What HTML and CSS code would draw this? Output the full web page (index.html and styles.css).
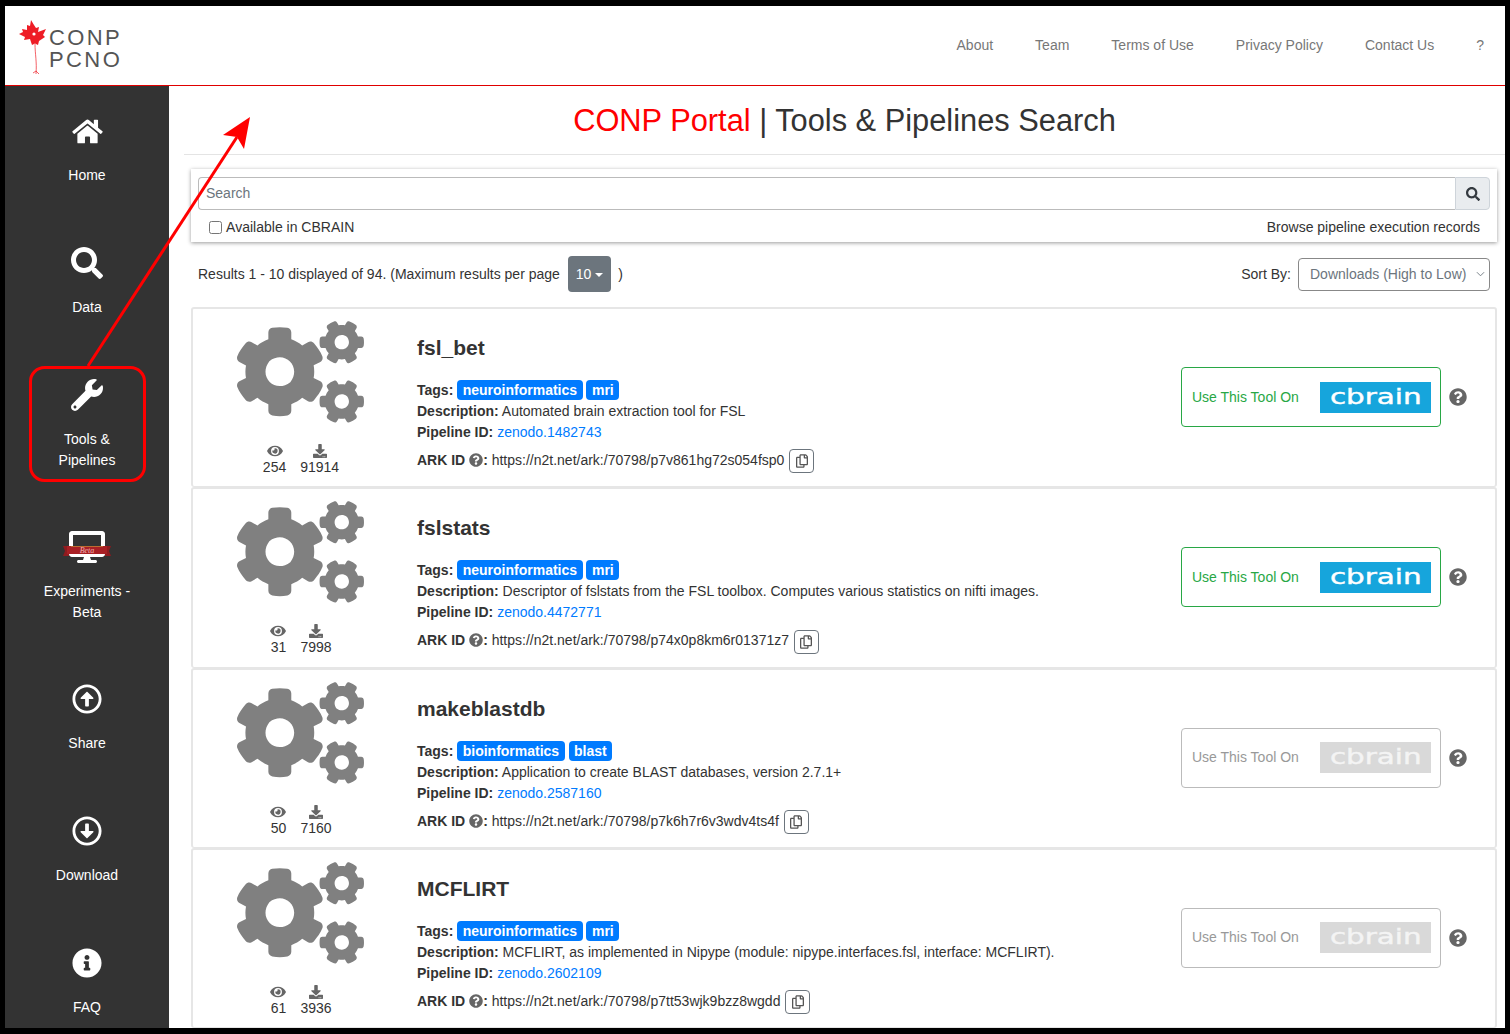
FILE: index.html
```html
<!doctype html>
<html lang="en">
<head>
  <meta charset="UTF-8">
  <meta name="viewport" content="width=device-width, initial-scale=1.0">
  <title>CONP Portal | Tools &amp; Pipelines Search</title>
  <link rel="stylesheet" href="styles.css">
</head>
<body>
  <!-- icon sprites -->
  <svg class="sprites" aria-hidden="true">
    <symbol id="i-home" viewBox="0 0 576 512"><path d="M280.37 148.26L96 300.11V464a16 16 0 0 0 16 16l112.06-.29a16 16 0 0 0 15.92-16V368a16 16 0 0 1 16-16h64a16 16 0 0 1 16 16v95.64a16 16 0 0 0 16 16.05L464 480a16 16 0 0 0 16-16V300L295.67 148.26a12.19 12.19 0 0 0-15.3 0zM571.6 251.47L488 182.56V44.05a12 12 0 0 0-12-12h-56a12 12 0 0 0-12 12v72.61L318.47 43a48 48 0 0 0-61 0L4.34 251.47a12 12 0 0 0-1.6 16.9l25.5 31A12 12 0 0 0 45.15 301l235.22-193.74a12.19 12.19 0 0 1 15.3 0L530.9 301a12 12 0 0 0 16.9-1.6l25.5-31a12 12 0 0 0-1.7-16.93z"/></symbol>
    <symbol id="i-search" viewBox="0 0 512 512"><path d="M505 442.7L405.3 343c-4.5-4.5-10.6-7-17-7H372c27.6-35.3 44-79.7 44-128C416 93.1 322.9 0 208 0S0 93.1 0 208s93.1 208 208 208c48.3 0 92.7-16.4 128-44v16.3c0 6.4 2.5 12.5 7 17l99.7 99.7c9.4 9.4 24.6 9.4 33.9 0l28.3-28.3c9.4-9.4 9.4-24.6.1-34zM208 336c-70.7 0-128-57.2-128-128 0-70.7 57.2-128 128-128 70.7 0 128 57.2 128 128 0 70.7-57.2 128-128 128z"/></symbol>
    <symbol id="i-wrench" viewBox="0 0 512 512"><path d="M507.73 109.1c-2.24-9.03-13.54-12.09-20.12-5.51l-74.36 74.36-67.88-11.31-11.31-67.88 74.36-74.36c6.62-6.62 3.43-17.9-5.66-20.16-47.38-11.74-99.55.91-136.58 37.93-39.64 39.64-50.55 97.1-34.05 147.2L18.74 402.76c-24.99 24.99-24.99 65.51 0 90.5 24.99 24.99 65.51 24.99 90.5 0l213.21-213.21c50.12 16.71 107.47 5.68 147.37-34.22 37.07-37.07 49.7-89.32 37.91-136.73zM64 472c-13.25 0-24-10.75-24-24 0-13.26 10.75-24 24-24s24 10.74 24 24c0 13.25-10.75 24-24 24z"/></symbol>
    <symbol id="i-desktop" viewBox="0 0 576 512"><path d="M528 0H48C21.5 0 0 21.5 0 48v320c0 26.5 21.5 48 48 48h192l-16 48h-72c-13.3 0-24 10.7-24 24s10.7 24 24 24h272c13.3 0 24-10.7 24-24s-10.7-24-24-24h-72l-16-48h192c26.5 0 48-21.5 48-48V48c0-26.5-21.5-48-48-48zm-16 352H64V64h448v288z"/></symbol>
    <symbol id="i-up" viewBox="0 0 512 512"><path d="M256 504c137 0 248-111 248-248S393 8 256 8 8 119 8 256s111 248 248 248zm0-448c110.5 0 200 89.5 200 200s-89.5 200-200 200S56 366.5 56 256 145.5 56 256 56zm20 328h-40c-6.6 0-12-5.4-12-12V256h-67c-10.7 0-16-12.9-8.5-20.5l99-99c4.7-4.7 12.3-4.7 17 0l99 99c7.6 7.6 2.2 20.5-8.5 20.5h-67v116c0 6.6-5.4 12-12 12z"/></symbol>
    <symbol id="i-down" viewBox="0 0 512 512"><path d="M256 8C119 8 8 119 8 256s111 248 248 248 248-111 248-248S393 8 256 8zm0 448c-110.5 0-200-89.5-200-200S145.5 56 256 56s200 89.5 200 200-89.5 200-200 200zm-32-316v116h-67c-10.7 0-16 12.9-8.5 20.5l99 99c4.7 4.7 12.3 4.7 17 0l99-99c7.6-7.6 2.2-20.5-8.5-20.5h-67V140c0-6.6-5.4-12-12-12h-40c-6.6 0-12 5.4-12 12z"/></symbol>
    <symbol id="i-info" viewBox="0 0 512 512"><path d="M256 8C119.043 8 8 119.083 8 256c0 136.997 111.043 248 248 248s248-111.003 248-248C504 119.083 392.957 8 256 8zm0 110c23.196 0 42 18.804 42 42s-18.804 42-42 42-42-18.804-42-42 18.804-42 42-42zm56 254c0 6.627-5.373 12-12 12h-88c-6.627 0-12-5.373-12-12v-24c0-6.627 5.373-12 12-12h12v-64h-12c-6.627 0-12-5.373-12-12v-24c0-6.627 5.373-12 12-12h64c6.627 0 12 5.373 12 12v100h12c6.627 0 12 5.373 12 12v24z"/></symbol>
    <symbol id="i-eye" viewBox="0 0 576 512"><path d="M572.52 241.4C518.29 135.59 410.93 64 288 64S57.68 135.64 3.48 241.41a32.35 32.35 0 0 0 0 29.19C57.71 376.41 165.07 448 288 448s230.32-71.64 284.52-177.41a32.35 32.35 0 0 0 0-29.19zM288 400a144 144 0 1 1 144-144 143.93 143.93 0 0 1-144 144zm0-240a95.31 95.31 0 0 0-25.31 3.79 47.85 47.85 0 0 1-66.9 66.9A95.78 95.78 0 1 0 288 160z"/></symbol>
    <symbol id="i-download" viewBox="0 0 512 512"><path d="M216 0h80c13.3 0 24 10.7 24 24v168h87.7c17.8 0 26.7 21.5 14.1 34.1L269.7 378.3c-7.5 7.5-19.8 7.5-27.3 0L90.1 226.1c-12.6-12.6-3.7-34.1 14.1-34.1H192V24c0-13.3 10.7-24 24-24zm296 376v112c0 13.3-10.7 24-24 24H24c-13.3 0-24-10.7-24-24V376c0-13.3 10.7-24 24-24h146.7l49 49c20.1 20.1 52.5 20.1 72.6 0l49-49H488c13.3 0 24 10.7 24 24zm-124 88c0-11-9-20-20-20s-20 9-20 20 9 20 20 20 20-9 20-20zm64 0c0-11-9-20-20-20s-20 9-20 20 9 20 20 20 20-9 20-20z"/></symbol>
    <symbol id="i-question" viewBox="0 0 512 512"><path d="M504 256c0 136.997-111.043 248-248 248S8 392.997 8 256C8 119.083 119.043 8 256 8s248 111.083 248 248zM262.655 90c-54.497 0-89.255 22.957-116.549 63.758-3.536 5.286-2.353 12.415 2.715 16.258l34.699 26.31c5.205 3.947 12.621 3.008 16.665-2.122 17.864-22.658 30.113-35.797 57.303-35.797 20.429 0 45.698 13.148 45.698 32.958 0 14.976-12.363 22.667-32.534 33.976C247.128 238.528 216 254.941 216 296v4c0 6.627 5.373 12 12 12h56c6.627 0 12-5.373 12-12v-1.333c0-28.462 83.186-29.647 83.186-106.667 0-58.002-60.165-102-116.531-102zM256 338c-25.365 0-46 20.635-46 46 0 25.364 20.635 46 46 46s46-20.636 46-46c0-25.365-20.635-46-46-46z"/></symbol>
    <symbol id="i-copy" viewBox="0 0 448 512"><path d="M433.941 65.941l-51.882-51.882A48 48 0 0 0 348.118 0H176c-26.51 0-48 21.49-48 48v48H48c-26.51 0-48 21.49-48 48v320c0 26.51 21.49 48 48 48h224c26.51 0 48-21.49 48-48v-48h80c26.51 0 48-21.49 48-48V99.882a48 48 0 0 0-14.059-33.941zM266 464H54a6 6 0 0 1-6-6V150a6 6 0 0 1 6-6h74v224c0 26.51 21.49 48 48 48h96v42a6 6 0 0 1-6 6zm128-96H182a6 6 0 0 1-6-6V54a6 6 0 0 1 6-6h106v88c0 13.255 10.745 24 24 24h88v202a6 6 0 0 1-6 6zm6-256h-64V48h9.632c1.591 0 3.117.632 4.243 1.757l48.368 48.368a6 6 0 0 1 1.757 4.243V112z"/></symbol>
    <symbol id="i-cogs" viewBox="0 0 640 512"><path d="M512.1 191l-8.2 14.3c-3 5.3-9.4 7.5-15.1 5.4-11.8-4.4-22.6-10.7-32.1-18.6-4.6-3.8-5.8-10.5-2.8-15.7l8.2-14.3c-6.9-8-12.3-17.3-15.9-27.4h-16.5c-6 0-11.2-4.3-12.2-10.3-2-12-2.1-24.6 0-37.1 1-6 6.2-10.4 12.2-10.4h16.5c3.6-10.1 9-19.4 15.9-27.4l-8.2-14.3c-3-5.2-1.9-11.9 2.8-15.7 9.5-7.9 20.4-14.2 32.1-18.6 5.7-2.1 12.1.1 15.1 5.4l8.2 14.3c10.5-1.9 21.2-1.9 31.7 0L552 6.3c3-5.3 9.4-7.5 15.1-5.4 11.8 4.4 22.6 10.7 32.1 18.6 4.6 3.8 5.8 10.5 2.8 15.7l-8.2 14.3c6.9 8 12.3 17.3 15.9 27.4h16.5c6 0 11.2 4.3 12.2 10.3 2 12 2.1 24.6 0 37.1-1 6-6.2 10.4-12.2 10.4h-16.5c-3.6 10.1-9 19.4-15.9 27.4l8.2 14.3c3 5.2 1.9 11.9-2.8 15.7-9.5 7.9-20.4 14.2-32.1 18.6-5.7 2.1-12.1-.1-15.1-5.4l-8.2-14.3c-10.4 1.9-21.2 1.9-31.7 0zm-10.5-58.8c38.5 29.6 82.4-14.3 52.8-52.8-38.5-29.7-82.4 14.3-52.8 52.8zM386.3 286.1l33.7 16.8c10.1 5.8 14.5 18.1 10.5 29.1-8.9 24.2-26.4 46.4-42.6 65.8-7.4 8.9-20.2 11.1-30.3 5.3l-29.1-16.8c-16 13.7-34.6 24.6-54.9 31.7v33.6c0 11.6-8.3 21.6-19.7 23.6-24.6 4.2-50.4 4.4-75.9 0-11.5-2-20-11.9-20-23.6V418c-20.3-7.2-38.9-18-54.9-31.7L74 403c-10 5.8-22.9 3.6-30.3-5.3-16.2-19.4-33.3-41.6-42.2-65.7-4-10.9.4-23.2 10.5-29.1l33.3-16.8c-3.9-20.9-3.9-42.4 0-63.4L12 205.8c-10.1-5.8-14.6-18.1-10.5-29 8.9-24.2 26-46.4 42.2-65.8 7.4-8.9 20.2-11.1 30.3-5.3l29.1 16.8c16-13.7 34.6-24.6 54.9-31.7V57.1c0-11.5 8.2-21.5 19.6-23.5 24.6-4.2 50.5-4.4 76-.1 11.5 2 20 11.9 20 23.6v33.6c20.3 7.2 38.9 18 54.9 31.7l29.1-16.8c10-5.8 22.9-3.6 30.3 5.3 16.2 19.4 33.2 41.6 42.1 65.8 4 10.9.1 23.2-10 29.1l-33.7 16.8c3.9 21 3.9 42.5 0 63.5zm-117.6 21.1c59.2-77-28.7-164.9-105.7-105.7-59.2 77 28.7 164.9 105.7 105.7zm243.4 182.7l-8.2 14.3c-3 5.3-9.4 7.5-15.1 5.4-11.8-4.4-22.6-10.7-32.1-18.6-4.6-3.8-5.8-10.5-2.8-15.7l8.2-14.3c-6.9-8-12.3-17.3-15.9-27.4h-16.5c-6 0-11.2-4.3-12.2-10.3-2-12-2.1-24.6 0-37.1 1-6 6.2-10.4 12.2-10.4h16.5c3.6-10.1 9-19.4 15.9-27.4l-8.2-14.3c-3-5.2-1.9-11.9 2.8-15.7 9.5-7.9 20.4-14.2 32.1-18.6 5.7-2.1 12.1.1 15.1 5.4l8.2 14.3c10.5-1.9 21.2-1.9 31.7 0l8.2-14.3c3-5.3 9.4-7.5 15.1-5.4 11.8 4.4 22.6 10.7 32.1 18.6 4.6 3.8 5.8 10.5 2.8 15.7l-8.2 14.3c6.9 8 12.3 17.3 15.9 27.4h16.5c6 0 11.2 4.3 12.2 10.3 2 12 2.1 24.6 0 37.1-1 6-6.2 10.4-12.2 10.4h-16.5c-3.6 10.1-9 19.4-15.9 27.4l8.2 14.3c3 5.2 1.9 11.9-2.8 15.7-9.5 7.9-20.4 14.2-32.1 18.6-5.7 2.1-12.1-.1-15.1-5.4l-8.2-14.3c-10.4 1.9-21.2 1.9-31.7 0zM501.6 431c38.5 29.6 82.4-14.3 52.8-52.8-38.5-29.6-82.4 14.3-52.8 52.8z"/></symbol>
  </svg>

  <div class="frame">
    <header class="topbar">
      <a class="brand" href="#">
        <svg class="brand-leaf" viewBox="0 0 29 56">
          <path fill="#ee1c25" d="M12 0L15 5L17 8L20 7L19 12L27 9L24 15L26 17L20 21L19 25L16 23.5L13 25L11 19L5 20L6 17L0 14L4 12L3 9L8 10L8 5L11 6Z"/>
          <path fill="none" stroke="#ee1c25" stroke-width=".7" d="M16 24C16 34 18 42 17 54M14 53L17 51L20 54"/>
          <circle cx="15" cy="14" r="1.6" fill="#fff"/>
        </svg>
        <span class="brand-text">CONP<br>PCNO</span>
      </a>
      <nav class="toplinks">
        <a href="#">About</a>
        <a href="#">Team</a>
        <a href="#">Terms of Use</a>
        <a href="#">Privacy Policy</a>
        <a href="#">Contact Us</a>
        <a href="#">?</a>
      </nav>
    </header>

    <div class="layout">
      <aside class="sidebar">
        <a class="side-item" href="#">
          <span class="side-icon"><svg class="ic-home"><use href="#i-home"/></svg></span>
          Home
        </a>
        <a class="side-item" href="#">
          <span class="side-icon"><svg class="ic-big"><use href="#i-search"/></svg></span>
          Data
        </a>
        <a class="side-item two-line" href="#">
          <span class="side-icon"><svg class="ic-big"><use href="#i-wrench"/></svg></span>
          Tools &amp;<br>Pipelines
        </a>
        <a class="side-item two-line" href="#">
          <span class="side-icon">
            <svg class="ic-beta" viewBox="0 0 48 32">
              <use href="#i-desktop" x="5" y="0" width="38" height="32"/>
              <path fill="#8e1b1f" d="M0 15H6V25H0L2 20Z"/>
              <path fill="#8e1b1f" d="M48 15H42V25H48L46 20Z"/>
              <path fill="#a81f24" d="M4 15H44V23H4Z"/>
              <path fill="#c9a03c" d="M8 15H40V15.6H8Z"/>
              <text class="beta-text" x="24" y="21.5" text-anchor="middle">Beta</text>
            </svg>
          </span>
          Experiments -<br>Beta
        </a>
        <a class="side-item" href="#">
          <span class="side-icon"><svg class="ic-round"><use href="#i-up"/></svg></span>
          Share
        </a>
        <a class="side-item" href="#">
          <span class="side-icon"><svg class="ic-round"><use href="#i-down"/></svg></span>
          Download
        </a>
        <a class="side-item" href="#">
          <span class="side-icon"><svg class="ic-round"><use href="#i-info"/></svg></span>
          FAQ
        </a>
      </aside>

      <main class="content">
        <h1 class="page-title"><span class="title-red">CONP Portal</span> | Tools &amp; Pipelines Search</h1>

        <section class="search-card">
          <div class="search-group">
            <input class="search-input" type="text" placeholder="Search">
            <button class="search-btn" type="button"><svg><use href="#i-search"/></svg></button>
          </div>
          <div class="search-opts">
            <label class="cbrain-check"><input type="checkbox"> Available in CBRAIN</label>
            <a href="#">Browse pipeline execution records</a>
          </div>
        </section>

        <div class="results-bar">
          <div class="results-count">
            Results 1 - 10 displayed of 94. (Maximum results per page
            <button class="per-page" type="button">10<i class="caret"></i></button>
            )
          </div>
          <div class="sort">
            Sort By:
            <div class="sort-select">
              Downloads (High to Low)
              <svg viewBox="0 0 10 6"><path d="M1 1l4 4 4-4" fill="none" stroke="#6c757d"/></svg>
            </div>
          </div>
        </div>

        <article class="tool-card">
          <div class="tool-left">
            <svg class="tool-cogs"><use href="#i-cogs"/></svg>
            <div class="tool-stats">
              <div><svg class="ic-eye"><use href="#i-eye"/></svg>254</div>
              <div><svg class="ic-dl"><use href="#i-download"/></svg>91914</div>
            </div>
          </div>
          <div class="tool-info">
            <h2>fsl_bet</h2>
            <div><b>Tags:</b> <span class="tag">neuroinformatics</span> <span class="tag">mri</span></div>
            <div><b>Description:</b> Automated brain extraction tool for FSL</div>
            <div><b>Pipeline ID:</b> <a href="#">zenodo.1482743</a></div>
            <div class="ark"><b>ARK ID <svg class="ic-q"><use href="#i-question"/></svg>:</b> https://n2t.net/ark:/70798/p7v861hg72s054fsp0 <button class="copy-btn" type="button"><svg><use href="#i-copy"/></svg></button></div>
          </div>
          <div class="tool-action">
            <a class="use-btn" href="#">Use This Tool On <span class="cbrain-logo"><span>cbrain</span></span></a>
            <svg class="action-help"><use href="#i-question"/></svg>
          </div>
        </article>

        <article class="tool-card">
          <div class="tool-left">
            <svg class="tool-cogs"><use href="#i-cogs"/></svg>
            <div class="tool-stats">
              <div><svg class="ic-eye"><use href="#i-eye"/></svg>31</div>
              <div><svg class="ic-dl"><use href="#i-download"/></svg>7998</div>
            </div>
          </div>
          <div class="tool-info">
            <h2>fslstats</h2>
            <div><b>Tags:</b> <span class="tag">neuroinformatics</span> <span class="tag">mri</span></div>
            <div><b>Description:</b> Descriptor of fslstats from the FSL toolbox. Computes various statistics on nifti images.</div>
            <div><b>Pipeline ID:</b> <a href="#">zenodo.4472771</a></div>
            <div class="ark"><b>ARK ID <svg class="ic-q"><use href="#i-question"/></svg>:</b> https://n2t.net/ark:/70798/p74x0p8km6r01371z7 <button class="copy-btn" type="button"><svg><use href="#i-copy"/></svg></button></div>
          </div>
          <div class="tool-action">
            <a class="use-btn" href="#">Use This Tool On <span class="cbrain-logo"><span>cbrain</span></span></a>
            <svg class="action-help"><use href="#i-question"/></svg>
          </div>
        </article>

        <article class="tool-card">
          <div class="tool-left">
            <svg class="tool-cogs"><use href="#i-cogs"/></svg>
            <div class="tool-stats">
              <div><svg class="ic-eye"><use href="#i-eye"/></svg>50</div>
              <div><svg class="ic-dl"><use href="#i-download"/></svg>7160</div>
            </div>
          </div>
          <div class="tool-info">
            <h2>makeblastdb</h2>
            <div><b>Tags:</b> <span class="tag">bioinformatics</span> <span class="tag">blast</span></div>
            <div><b>Description:</b> Application to create BLAST databases, version 2.7.1+</div>
            <div><b>Pipeline ID:</b> <a href="#">zenodo.2587160</a></div>
            <div class="ark"><b>ARK ID <svg class="ic-q"><use href="#i-question"/></svg>:</b> https://n2t.net/ark:/70798/p7k6h7r6v3wdv4ts4f <button class="copy-btn" type="button"><svg><use href="#i-copy"/></svg></button></div>
          </div>
          <div class="tool-action">
            <a class="use-btn disabled" href="#">Use This Tool On <span class="cbrain-logo"><span>cbrain</span></span></a>
            <svg class="action-help"><use href="#i-question"/></svg>
          </div>
        </article>

        <article class="tool-card">
          <div class="tool-left">
            <svg class="tool-cogs"><use href="#i-cogs"/></svg>
            <div class="tool-stats">
              <div><svg class="ic-eye"><use href="#i-eye"/></svg>61</div>
              <div><svg class="ic-dl"><use href="#i-download"/></svg>3936</div>
            </div>
          </div>
          <div class="tool-info">
            <h2>MCFLIRT</h2>
            <div><b>Tags:</b> <span class="tag">neuroinformatics</span> <span class="tag">mri</span></div>
            <div><b>Description:</b> MCFLIRT, as implemented in Nipype (module: nipype.interfaces.fsl, interface: MCFLIRT).</div>
            <div><b>Pipeline ID:</b> <a href="#">zenodo.2602109</a></div>
            <div class="ark"><b>ARK ID <svg class="ic-q"><use href="#i-question"/></svg>:</b> https://n2t.net/ark:/70798/p7tt53wjk9bzz8wgdd <button class="copy-btn" type="button"><svg><use href="#i-copy"/></svg></button></div>
          </div>
          <div class="tool-action">
            <a class="use-btn disabled" href="#">Use This Tool On <span class="cbrain-logo"><span>cbrain</span></span></a>
            <svg class="action-help"><use href="#i-question"/></svg>
          </div>
        </article>
      </main>
    </div>
  </div>

  <!-- red annotation drawn over the page -->
  <svg class="annotation" viewBox="0 0 1510 1034">
    <rect x="30.5" y="367.5" width="114" height="113" rx="14" fill="none" stroke="#f00" stroke-width="3"/>
    <path d="M88 366L237 137" fill="none" stroke="#f00" stroke-width="3"/>
    <path d="M250 117L223 135L237 137L244 149Z" fill="#f00"/>
  </svg>
</body>
</html>
```

FILE: styles.css
```css
* {
  box-sizing: border-box;
}

html, body {
  height: 100%;
}

body {
  margin: 0;
  background-color: #000;
  color: #333;
  font-family: "Liberation Sans", Arial, sans-serif;
  font-size: 14px;
  line-height: 21px;
  overflow: hidden;
}

a {
  color: inherit;
  text-decoration: none;
}

.sprites {
  display: none;
}

.frame {
  margin: 6px 5px 0 5px;
  height: 1022px;
  background-color: #fff;
  display: flex;
  flex-direction: column;
  overflow: hidden;
}

/* top bar */
.topbar {
  height: 80px;
  flex: none;
  display: flex;
  align-items: center;
  justify-content: space-between;
  padding: 0 21px 0 14px;
  border-bottom: 1px solid #e00000;
}

.brand {
  display: flex;
  align-items: flex-start;
  gap: 1px;
  margin-top: 5px;
}

.brand-leaf {
  width: 29px;
  height: 56px;
}

.brand-text {
  margin-top: 7px;
  font-size: 22px;
  line-height: 22px;
  letter-spacing: 2.4px;
  color: #555;
}

.toplinks {
  display: flex;
  gap: 42px;
  color: #777;
  margin-top: -1px;
}

/* sidebar */
.layout {
  flex: 1;
  display: flex;
  min-height: 0;
}

.sidebar {
  width: 164px;
  flex: none;
  background-color: #333;
  color: #fff;
  text-align: center;
  overflow: hidden;
}

.side-item {
  display: block;
  padding: 29px 0 32px;
}

.side-item.two-line {
  padding-bottom: 31px;
}

.side-icon {
  display: flex;
  align-items: center;
  justify-content: center;
  height: 32px;
  margin-bottom: 18px;
}

.side-icon svg {
  fill: #fff;
}

.ic-home {
  width: 31px;
  height: 27px;
}

.ic-big {
  width: 32px;
  height: 32px;
}

.ic-round {
  width: 30px;
  height: 30px;
}

.ic-beta {
  width: 48px;
  height: 32px;
}

.beta-text {
  font-family: "Liberation Serif", serif;
  font-style: italic;
  font-size: 8px;
  fill: #f0b0b0;
}

/* main column */
.content {
  flex: 1;
  min-width: 0;
  padding: 0 8px 0 15px;
}

.page-title {
  margin: 0 -8px 0 0;
  height: 69px;
  border-bottom: 1px solid #e4e4e4;
  font-size: 30.8px;
  font-weight: normal;
  line-height: 69px;
  text-align: center;
}

.title-red {
  color: #f00;
}

.search-card {
  margin: 14px 0 0 7px;
  height: 73px;
  padding: 8px 7px 0;
  box-shadow: 0 1px 4px rgba(0, 0, 0, 0.4);
}

.search-group {
  display: flex;
  height: 33px;
}

.search-input {
  flex: 1;
  padding: 0 7px;
  border: 1px solid #bbb;
  border-right: 0;
  border-radius: 4px 0 0 4px;
  font: inherit;
  outline: none;
}

.search-input::placeholder {
  color: #6c757d;
}

.search-btn {
  width: 35px;
  padding: 0;
  background-color: #e9ecef;
  border: 1px solid #ced4da;
  border-radius: 0 4px 4px 0;
}

.search-btn svg {
  width: 14px;
  height: 14px;
  fill: #343a40;
  display: block;
  margin: auto;
}

.search-opts {
  display: flex;
  justify-content: space-between;
  padding: 7px 10px 0 10px;
}

.cbrain-check input {
  width: 13px;
  height: 13px;
  margin: 0 1px 0 1px;
  vertical-align: -2px;
}

.results-bar {
  display: flex;
  align-items: center;
  justify-content: space-between;
  height: 36px;
  margin: 14px 7px 15px 14px;
}

.per-page {
  height: 36px;
  padding: 0 8px;
  margin: 0 3px 0 4px;
  background-color: #6c757d;
  border: 0;
  border-radius: 4px;
  color: #fff;
  font: inherit;
}

.caret {
  display: inline-block;
  margin-left: 4px;
  vertical-align: 2px;
  border-top: 4px solid #fff;
  border-left: 4px solid transparent;
  border-right: 4px solid transparent;
}

.sort {
  display: flex;
  align-items: center;
  gap: 7px;
}

.sort-select {
  width: 192px;
  height: 33px;
  display: flex;
  align-items: center;
  justify-content: space-between;
  padding: 0 4px 0 11px;
  border: 1px solid #888;
  border-radius: 4px;
  color: #6c757d;
}

.sort-select svg {
  width: 9px;
  height: 6px;
}

/* tool cards */
.tool-card {
  height: 180.33px;
  margin-left: 7px;
  display: flex;
  border: 2px solid #e6e6e6;
  border-bottom-width: 1px;
  border-radius: 3px;
}

.tool-left {
  width: 216px;
  flex: none;
  display: flex;
  flex-direction: column;
  align-items: center;
  padding: 12px 0 0 0;
}

.tool-cogs {
  width: 127px;
  height: 102px;
  fill: #808080;
  margin-right: 1px;
}

.tool-stats {
  display: flex;
  gap: 14px;
  margin-top: 21px;
  text-align: center;
}

.tool-stats div {
  line-height: 18px;
}

.tool-stats svg {
  display: block;
  margin: 0 auto;
  fill: #666;
  width: 16px;
  height: 14px;
}

.tool-info {
  flex: 1;
  padding: 0 0 0 8px;
}

.tool-info h2 {
  margin: 26px 0 19px;
  font-size: 21px;
  line-height: 26px;
}

.tool-info a {
  color: #007bff;
}

.tag {
  display: inline-block;
  height: 20px;
  padding: 0 5.5px;
  background-color: #007bff;
  border-radius: 4px;
  color: #fff;
  font-weight: bold;
  line-height: 20px;
}

.ark {
  margin-top: 3px;
  line-height: 28px;
}

.ic-q {
  width: 14px;
  height: 14px;
  fill: #666;
  vertical-align: -2px;
}

.copy-btn {
  width: 25px;
  height: 24px;
  padding: 0;
  margin-left: 1px;
  vertical-align: middle;
  background-color: #fff;
  border: 1px solid #6c757d;
  border-radius: 4px;
}

.copy-btn svg {
  width: 12px;
  height: 14px;
  fill: #555;
  display: block;
  margin: auto;
}

.tool-action {
  width: 314px;
  flex: none;
  display: flex;
  align-items: flex-start;
  padding-top: 58px;
}

.use-btn {
  width: 260px;
  height: 60px;
  display: flex;
  align-items: center;
  justify-content: space-between;
  padding: 0 9px 0 10px;
  border: 1px solid #28a745;
  border-radius: 4px;
  color: #28a745;
}

.use-btn.disabled {
  border-color: #bbb;
  color: #999;
}

.cbrain-logo {
  width: 111px;
  height: 31px;
  display: flex;
  align-items: center;
  justify-content: center;
  background-color: #16a5dc;
  color: #fff;
  font-family: "DejaVu Sans", sans-serif;
  font-size: 21px;
  line-height: 29px;
}

.cbrain-logo span {
  display: inline-block;
  transform: scaleX(1.4);
  -webkit-text-stroke: 0.4px currentColor;
}

.disabled .cbrain-logo {
  background-color: #d9d9d9;
  color: #f4f4f4;
}

.action-help {
  width: 18px;
  height: 18px;
  margin: 21px 0 0 8px;
  fill: #666;
}

/* annotation */
.annotation {
  position: absolute;
  top: 0;
  left: 0;
  width: 1510px;
  height: 1034px;
  pointer-events: none;
}
```
